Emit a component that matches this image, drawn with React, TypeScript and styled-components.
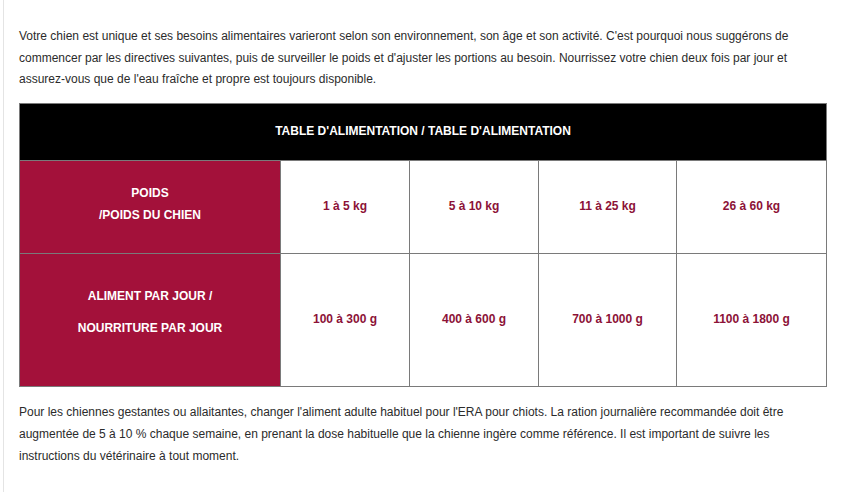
import React from "react";
import styled, { createGlobalStyle } from "styled-components";

const GlobalStyle = createGlobalStyle`
  html, body {
    margin: 0;
    padding: 0;
    background: #ffffff;
  }
  body {
    font-family: "Liberation Sans", Arial, sans-serif;
  }
`;

const weights = ["1 à 5 kg", "5 à 10 kg", "11 à 25 kg", "26 à 60 kg"];
const portions = ["100 à 300 g", "400 à 600 g", "700 à 1000 g", "1100 à 1800 g"];
const colWidths = [261, 129, 129, 138, 150];

function App() {
  return (
    <Page>
      <GlobalStyle />
      <Content>
        <Paragraph>
          Votre chien est unique et ses besoins alimentaires varieront selon son environnement, son âge et son
          activité. C'est pourquoi nous suggérons de commencer par les directives suivantes, puis de surveiller le
          poids et d'ajuster les portions au besoin. Nourrissez votre chien deux fois par jour et assurez-vous que
          de l'eau fraîche et propre est toujours disponible.
        </Paragraph>
        <FeedingTable>
          <colgroup>
            {colWidths.map((w, i) => (
              <Col key={i} $width={w} />
            ))}
          </colgroup>
          <tbody>
            <tr>
              <HeadCell colSpan={5}>TABLE D'ALIMENTATION / TABLE D'ALIMENTATION</HeadCell>
            </tr>
            <Row $height={93}>
              <LabelCell $bottom={5}>
                <LabelLine $gap={0}>POIDS</LabelLine>
                <LabelLine $gap={0}>/POIDS DU CHIEN</LabelLine>
              </LabelCell>
              {weights.map((w) => (
                <ValueCell key={w}>{w}</ValueCell>
              ))}
            </Row>
            <Row $height={133}>
              <LabelCell $bottom={14}>
                <LabelLine $gap={0}>ALIMENT PAR JOUR /</LabelLine>
                <LabelLine $gap={10}>NOURRITURE PAR JOUR</LabelLine>
              </LabelCell>
              {portions.map((p) => (
                <ValueCell key={p}>{p}</ValueCell>
              ))}
            </Row>
          </tbody>
        </FeedingTable>
        <Paragraph $top={15}>
          Pour les chiennes gestantes ou allaitantes, changer l'aliment adulte habituel pour l'ERA pour chiots. La
          ration journalière recommandée doit être augmentée de 5 à 10 % chaque semaine, en prenant la dose
          habituelle que la chienne ingère comme référence. Il est important de suivre les instructions du
          vétérinaire à tout moment.
        </Paragraph>
      </Content>
    </Page>
  );
}

const Page = styled.div`
  width: 841px;
  height: 492px;
  overflow: hidden;
  background: #ffffff;
`;

const Content = styled.div`
  margin-left: 3px;
  height: 100%;
  box-sizing: border-box;
  border-left: 1px solid #e4e4e4;
  padding: 26px 15px 0 15px;
`;

const Paragraph = styled.p<{ $top?: number }>`
  margin: ${({ $top }) => $top ?? 0}px 0 0 0;
  font-size: 12px;
  line-height: 21.7px;
  color: #2b2b2b;
`;

const FeedingTable = styled.table`
  margin-top: 12px;
  width: 807px;
  border-collapse: collapse;
  table-layout: fixed;
  font-size: 12px;
  font-weight: bold;
  text-align: center;
`;

const Col = styled.col<{ $width: number }>`
  width: ${({ $width }) => $width}px;
`;

const HeadCell = styled.td`
  height: 54px;
  padding: 0 0 2px 0;
  background: #000000;
  color: #ffffff;
  border: 1px solid #7a7a7a;
`;

const Row = styled.tr<{ $height: number }>`
  height: ${({ $height }) => $height}px;
`;

const LabelCell = styled.td<{ $bottom: number }>`
  padding: 0 0 ${({ $bottom }) => $bottom}px 0;
  background: #a3113a;
  color: #ffffff;
  border: 1px solid #7a7a7a;
`;

const LabelLine = styled.div<{ $gap: number }>`
  line-height: 21.7px;
  margin-top: ${({ $gap }) => $gap}px;
`;

const ValueCell = styled.td`
  padding: 0 0 2px 0;
  background: #ffffff;
  color: #8c1237;
  border: 1px solid #7a7a7a;
`;

export default App;
